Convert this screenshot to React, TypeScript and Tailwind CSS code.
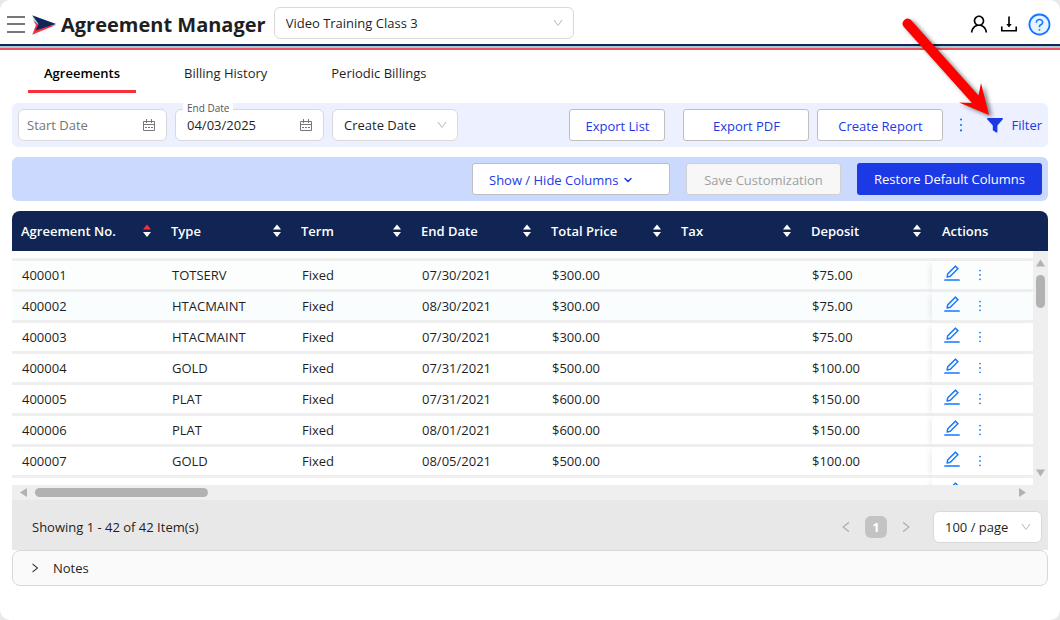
import { useState } from "react";
import {
  AiOutlineDown,
  AiOutlineDownload,
  AiOutlineEdit,
  AiOutlineLeft,
  AiOutlineMore,
  AiOutlineQuestionCircle,
  AiOutlineRight,
  AiOutlineUser,
} from "react-icons/ai";
import { ChevronDown } from "lucide-react";
import clsx from "clsx";

interface Agreement {
  no: string;
  type: string;
  term: string;
  endDate: string;
  price: string;
  deposit: string;
}

const agreements: Agreement[] = [
  { no: "400001", type: "TOTSERV", term: "Fixed", endDate: "07/30/2021", price: "$300.00", deposit: "$75.00" },
  { no: "400002", type: "HTACMAINT", term: "Fixed", endDate: "08/30/2021", price: "$300.00", deposit: "$75.00" },
  { no: "400003", type: "HTACMAINT", term: "Fixed", endDate: "07/30/2021", price: "$300.00", deposit: "$75.00" },
  { no: "400004", type: "GOLD", term: "Fixed", endDate: "07/31/2021", price: "$500.00", deposit: "$100.00" },
  { no: "400005", type: "PLAT", term: "Fixed", endDate: "07/31/2021", price: "$600.00", deposit: "$150.00" },
  { no: "400006", type: "PLAT", term: "Fixed", endDate: "08/01/2021", price: "$600.00", deposit: "$150.00" },
  { no: "400007", type: "GOLD", term: "Fixed", endDate: "08/05/2021", price: "$500.00", deposit: "$100.00" },
];

const columns = ["Agreement No.", "Type", "Term", "End Date", "Total Price", "Tax", "Deposit"];
const tabs = ["Agreements", "Billing History", "Periodic Billings"];

function Logo() {
  return (
    <svg width="24" height="20" viewBox="0 0 24 20" aria-hidden="true">
      <path d="M0 0 L24 9 L0 20 L4 10 Z" fill="#a9d6dc" />
      <path d="M1 5 L4 10 L0.5 19.5 L24 10 L9 12 Z" fill="#fa2f3c" />
      <path d="M0.5 0.5 L24 9 L3.5 15.5 L6.5 9 Z" fill="#12265a" />
    </svg>
  );
}

/** Pair of sort triangles, the upper one is red when sorted ascending */
function SortIcon({ active }: { active: boolean }) {
  return (
    <svg width="10" height="14" viewBox="0 0 10 14" aria-hidden="true">
      <path d="M5 0.5 L9 5.5 H1 Z" fill={active ? "#fa2f3c" : "#ffffff"} />
      <path d="M5 13 L9 8 H1 Z" fill="#ffffff" />
    </svg>
  );
}

function CalendarIcon({ className }: { className?: string }) {
  return (
    <svg className={className} width="12" height="12" viewBox="0 0 12 12" fill="none" stroke="currentColor" aria-hidden="true">
      <path d="M0.5 2.5 H11.5 V11.5 H0.5 Z M0.5 5.5 H11.5 M3.5 0 V4 M8.5 0 V4" />
      <path d="M2 8.5 H10" strokeDasharray="2 1" />
    </svg>
  );
}

function FilterIcon() {
  return (
    <svg width="16" height="15" viewBox="0 0 16 15" fill="currentColor" aria-hidden="true">
      <path d="M0.5 0 H15.5 Q16.2 0.4 15.8 1.2 L10.4 7.6 V14.6 H9.2 L5.8 12.2 V7.6 L0.2 1.2 Q-0.2 0.4 0.5 0 Z" />
    </svg>
  );
}

interface SelectBoxProps {
  label: string;
  value: string;
  className?: string;
}

function SelectBox({ label, value, className }: SelectBoxProps) {
  return (
    <div className={clsx("relative", className)}>
      <select
        aria-label={label}
        className="h-8 w-full appearance-none rounded-md border border-[#d9d9d9] bg-white pr-7 pl-[11px]"
      >
        <option>{value}</option>
      </select>
      <AiOutlineDown className="pointer-events-none absolute top-2.5 right-2.5 size-3 text-[#bfbfbf]" />
    </div>
  );
}

interface DateBoxProps {
  id: string;
  label: string;
  value: string;
  onChange: (value: string) => void;
}

function DateBox({ id, label, value, onChange }: DateBoxProps) {
  return (
    <div className="relative w-[149px]">
      {/* The label floats on the border once there is a value */}
      {value && (
        <label htmlFor={id} className="absolute -top-1.5 left-2 bg-white px-1 text-[10px] leading-[10px] text-[#555]">
          {label}
        </label>
      )}
      <input
        id={id}
        type="text"
        aria-label={label}
        value={value}
        placeholder={label}
        onChange={(e) => onChange(e.target.value)}
        className={clsx(
          "h-8 w-full rounded-md border border-[#d9d9d9] bg-white pr-8 placeholder:text-[#757575]",
          value ? "pl-[11px]" : "pl-2"
        )}
      />
      <CalendarIcon className="pointer-events-none absolute top-2.5 right-3 text-[#777]" />
    </div>
  );
}

const buttonClass = "h-8 rounded-[3px] border border-[#bfbfbf] bg-white pt-0.5 text-[#1c39e6]";
const rowClass = "h-[31px] [&>td]:border-b-3 [&>td]:border-[#efefef] [&>td]:py-0 [&>td]:pl-2.5";
const actionCellClass = "shadow-[-5px_0_6px_-3px_rgba(0,0,0,0.08)]";

export default function App() {
  const [tab, setTab] = useState(tabs[0]);
  const [startDate, setStartDate] = useState("");
  const [endDate, setEndDate] = useState("04/03/2025");

  return (
    <div className="bg-[#e9e9e9]">
      <div className="relative min-h-screen overflow-hidden rounded-[10px] bg-white font-['Open_Sans','Noto_Sans',sans-serif] text-[13px] leading-5 text-[#1f1f1f]">
        {/* Header */}
        <header className="flex h-11 items-center pt-0.5 pr-2.5 pl-[7px]">
          <button type="button" aria-label="Menu" className="mt-0.5 flex h-[17px] w-[18px] flex-col justify-between">
            <span className="h-0.5 w-full bg-[#777]" />
            <span className="h-0.5 w-full bg-[#777]" />
            <span className="h-0.5 w-full bg-[#777]" />
          </button>
          <div className="ml-[7px] flex items-center gap-[5px] pt-1">
            <Logo />
            <h1 className="text-[20px] leading-7 font-bold whitespace-nowrap">Agreement Manager</h1>
          </div>
          <SelectBox label="Company" value="Video Training Class 3" className="ml-2 w-[300px]" />
          <div className="ml-auto flex items-center gap-2 pt-0.5 text-black">
            <button type="button" aria-label="Account">
              <AiOutlineUser className="size-[22px]" />
            </button>
            <button type="button" aria-label="Download">
              <AiOutlineDownload className="size-[22px]" />
            </button>
            <button
              type="button"
              aria-label="Help"
              className="flex size-[22px] items-center justify-center rounded-full bg-[#e6f4ff] text-[#1677ff]"
            >
              <AiOutlineQuestionCircle className="size-[25px] shrink-0" />
            </button>
          </div>
        </header>
        <div className="h-0.5 bg-[#12265a]" />
        <div className="h-0.5 bg-[#a3ced6]" />
        <div className="h-0.5 bg-[#f0525c]" />

        {/* Tabs */}
        <nav className="flex h-[43px] gap-8 pl-7">
          {tabs.map((name) => (
            <button
              key={name}
              type="button"
              onClick={() => setTab(name)}
              className={clsx(
                "border-b-3 px-4 pt-1.5",
                tab === name ? "border-[#fa2f3c] font-semibold text-black" : "border-transparent"
              )}
            >
              {name}
            </button>
          ))}
        </nav>

        <main className="px-3 pt-2.5">
          {/* Filters and exports */}
          <div className="flex h-11 items-center rounded-md bg-[#ecf0ff] px-1.5">
            <div className="flex gap-2">
              <DateBox id="start-date" label="Start Date" value={startDate} onChange={setStartDate} />
              <DateBox id="end-date" label="End Date" value={endDate} onChange={setEndDate} />
              <SelectBox label="Date type" value="Create Date" className="w-[126px]" />
            </div>
            <div className="ml-auto flex items-center">
              <button type="button" className={clsx(buttonClass, "mr-[18px] w-24")}>
                Export List
              </button>
              <button type="button" className={clsx(buttonClass, "mr-2 w-[126px]")}>
                Export PDF
              </button>
              <button type="button" className={clsx(buttonClass, "w-[126px]")}>
                Create Report
              </button>
              <button type="button" aria-label="More" className="ml-2 text-[#1677ff]">
                <AiOutlineMore className="size-5" />
              </button>
              <button type="button" className="ml-4 flex items-center gap-2 text-[#1c39e6]">
                <FilterIcon />
                Filter
              </button>
            </div>
          </div>

          {/* Column customization */}
          <div className="mt-2.5 flex h-11 items-center justify-end gap-4 rounded-md bg-[#ccd9ff] px-1.5">
            <button type="button" className={clsx(buttonClass, "flex w-[198px] items-center gap-1 pl-4")}>
              Show / Hide Columns
              <ChevronDown className="size-3" strokeWidth={3} />
            </button>
            <button
              type="button"
              disabled
              className="h-8 w-[155px] rounded-[3px] border border-[#d0d0d0] bg-[#f7f7f7] pt-0.5 text-[#a0a0a0]"
            >
              Save Customization
            </button>
            <button type="button" className="h-8 w-[185px] rounded-[3px] bg-[#1c39e6] text-white">
              Restore Default Columns
            </button>
          </div>

          {/* Agreements table */}
          <div className="mt-2.5 flex h-[274px] overflow-hidden rounded-t-lg">
            <div className="min-w-0 flex-1 overflow-hidden">
              <table className="w-full table-fixed border-separate border-spacing-0 text-left">
                <colgroup>
                  <col className="w-[150px]" />
                  <col className="w-[130px]" />
                  <col className="w-[120px]" />
                  <col className="w-[130px]" />
                  <col className="w-[130px]" />
                  <col className="w-[130px]" />
                  <col className="w-[130px]" />
                  <col className="w-[101px]" />
                </colgroup>
                <thead className="bg-[#102554] text-white">
                  <tr className="h-10">
                    {columns.map((name, i) => (
                      <th key={name} className="py-0 pr-2.5 pl-[9px] font-semibold">
                        <button type="button" className="flex w-full items-center justify-between">
                          {name}
                          <SortIcon active={i === 0} />
                        </button>
                      </th>
                    ))}
                    <th className="py-0 pl-2.5 font-semibold">Actions</th>
                  </tr>
                </thead>
                <tbody>
                  <tr aria-hidden="true">
                    <td colSpan={8} className="h-2.5 border-b-3 border-[#efefef] p-0" />
                  </tr>
                  {agreements.map((row, i) => (
                    <tr key={row.no} className={clsx(rowClass, i === 0 && "bg-[#fcfefe]", i === 1 && "bg-[#f9fdfd]")}>
                      <td>{row.no}</td>
                      <td>{row.type}</td>
                      <td>{row.term}</td>
                      <td>{row.endDate}</td>
                      <td>{row.price}</td>
                      <td />
                      <td>{row.deposit}</td>
                      <td className={actionCellClass}>
                        <div className="flex items-center gap-2.5 text-[#1677ff]">
                          <button type="button" aria-label={"Edit " + row.no} className="pb-1">
                            <AiOutlineEdit className="size-5" />
                          </button>
                          <button type="button" aria-label={"More for " + row.no}>
                            <AiOutlineMore className="size-4" />
                          </button>
                        </div>
                      </td>
                    </tr>
                  ))}
                  {/* Next row, cut off by the scroll area */}
                  <tr className={rowClass} aria-hidden="true">
                    <td colSpan={7} />
                    <td className={actionCellClass}>
                      <div className="pb-1 text-[#1677ff]">
                        <AiOutlineEdit className="size-5" />
                      </div>
                    </td>
                  </tr>
                </tbody>
              </table>
            </div>
            {/* Vertical scrollbar */}
            <div className="flex w-[15px] flex-col" aria-hidden="true">
              <div className="h-10 bg-[#102554]" />
              <div className="flex flex-1 flex-col items-center bg-[#efefef] pt-2 pb-2">
                <svg width="9" height="8" viewBox="0 0 9 8">
                  <path d="M4.5 0.5 L9 7.5 H0 Z" fill="#b2b2b2" />
                </svg>
                <div className="mt-2 h-[33px] w-[9px] rounded-full bg-[#b2b2b2]" />
                <svg className="mt-auto" width="9" height="8" viewBox="0 0 9 8">
                  <path d="M4.5 7.5 L9 0.5 H0 Z" fill="#b2b2b2" />
                </svg>
              </div>
            </div>
          </div>
          {/* Horizontal scrollbar */}
          <div className="flex h-[15px] items-center bg-[#efefef] pr-[22px] pl-2" aria-hidden="true">
            <svg width="8" height="9" viewBox="0 0 8 9">
              <path d="M0 4.5 L7 0 V9 Z" fill="#b2b2b2" />
            </svg>
            <div className="ml-[7px] h-[9px] w-[173px] rounded-full bg-[#b2b2b2]" />
            <svg className="ml-auto" width="8" height="9" viewBox="0 0 8 9">
              <path d="M8 4.5 L1 0 V9 Z" fill="#b2b2b2" />
            </svg>
          </div>

          {/* Pagination */}
          <footer className="flex h-[50px] items-center bg-[#e8e8e8] pt-1 pr-1.5 pl-5">
            <p>Showing 1 - 42 of 42 Item(s)</p>
            <div className="ml-auto flex items-center gap-3 text-[#a8a8a8]">
              <button type="button" aria-label="Previous page">
                <AiOutlineLeft className="size-3.5" />
              </button>
              <button type="button" className="size-[22px] rounded-md bg-[#c3c3c3] font-bold text-white">
                1
              </button>
              <button type="button" aria-label="Next page">
                <AiOutlineRight className="size-3.5" />
              </button>
            </div>
            <SelectBox label="Page size" value="100 / page" className="ml-5 w-[109px]" />
          </footer>

          {/* Notes */}
          <button
            type="button"
            aria-expanded="false"
            className="flex h-9 w-full items-center gap-3 rounded-lg border border-[#d9d9d9] bg-[#fafafa] pl-4 text-left"
          >
            <AiOutlineRight className="size-3" />
            Notes
          </button>
        </main>

        {/* Red pointer over the filter button */}
        <svg
          className="pointer-events-none absolute top-3 right-[60px] drop-shadow-[3px_2px_2px_rgba(0,0,0,0.5)]"
          width="100"
          height="112"
          viewBox="900 12 100 112"
          aria-hidden="true"
        >
          <path
            d="M903.5 26.5 A5 5 0 0 1 911 20 L978.5 95.5 L981 83 L989 115 L959 102.5 L972 103 Z"
            fill="#fe0000"
          />
        </svg>
      </div>
    </div>
  );
}
